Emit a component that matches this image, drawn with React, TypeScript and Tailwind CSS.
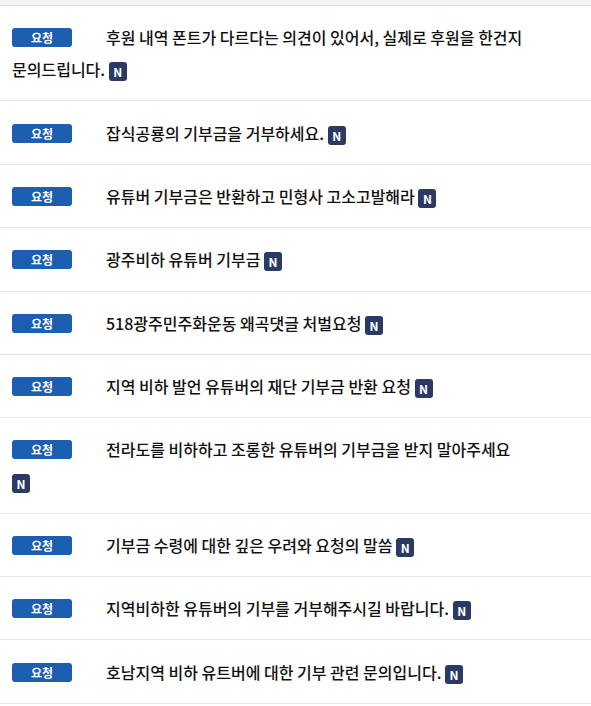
const items = [
  "후원 내역 폰트가 다르다는 의견이 있어서, 실제로 후원을 한건지 문의드립니다.",
  "잡식공룡의 기부금을 거부하세요.",
  "유튜버 기부금은 반환하고 민형사 고소고발해라",
  "광주비하 유튜버 기부금",
  "518광주민주화운동 왜곡댓글 처벌요청",
  "지역 비하 발언 유튜버의 재단 기부금 반환 요청",
  "전라도를 비하하고 조롱한 유튜버의 기부금을 받지 말아주세요",
  "기부금 수령에 대한 깊은 우려와 요청의 말씀",
  "지역비하한 유튜버의 기부를 거부해주시길 바랍니다.",
  "호남지역 비하 유트버에 대한 기부 관련 문의입니다.",
]

export default function App() {
  return (
    <div className="min-h-[706px] bg-white font-['Noto_Sans_CJK_KR',sans-serif] text-[#111]">
      <div className="h-[6px] border-b border-[#dde0e5] bg-[#f3f4f7]" />
      <ul>
        {items.map((t, i) => (
          <li
            key={i}
            className="break-keep border-b border-[#e3e3e3] py-[15.2px] pl-3 pr-[64px] text-[16px] font-medium leading-[32px]"
          >
            <span className="mr-[34px] inline-block h-[19px] w-[60px] rounded-[3px] bg-[#1c5fb0] text-center align-[1px] text-[12px] font-bold leading-[19px] text-white">
              요청
            </span>
            {t}{" "}
            <span className="inline-block h-[19px] w-[18px] rounded-[3px] bg-[#2b3a63] text-center align-[-1px] text-[12px] font-bold leading-[19px] text-white">
              N
            </span>
          </li>
        ))}
      </ul>
    </div>
  )
}
